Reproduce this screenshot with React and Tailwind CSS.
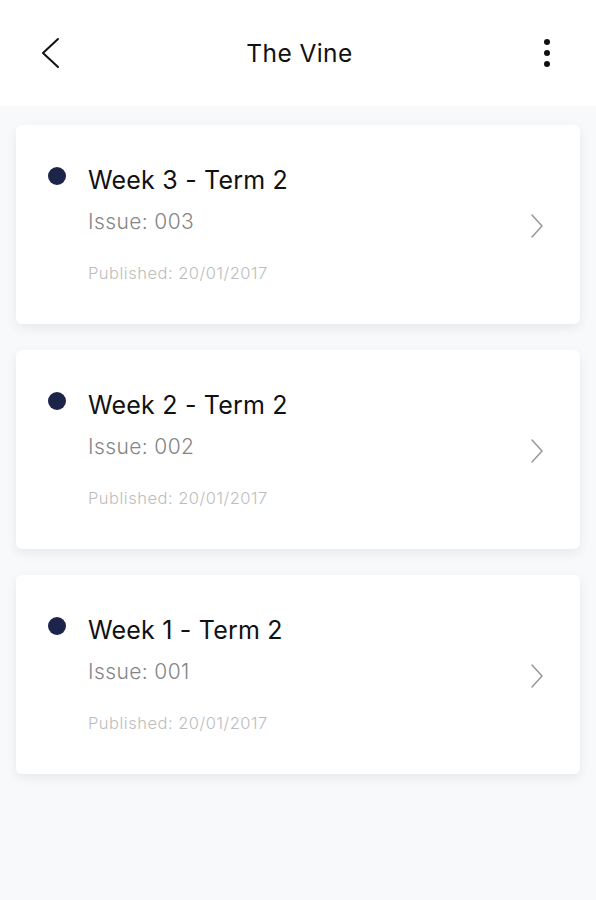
import React from "react";

const items = [
  { title: "Week 3 - Term 2", issue: "003" },
  { title: "Week 2 - Term 2", issue: "002" },
  { title: "Week 1 - Term 2", issue: "001" },
];

export default function App() {
  return (
    <div className="min-h-[900px] w-[596px] bg-[#f8f9fa]" style={{ fontFamily: "Inter, 'Noto Sans', sans-serif" }}>
      <header className="flex h-[106px] items-center justify-between bg-white pl-[40px] pr-[41px]">
        <svg width="20" height="32" viewBox="0 0 20 32" fill="none" stroke="#111" strokeWidth="2" strokeLinecap="round" strokeLinejoin="round">
          <path d="M18 2 L3 16 L18 30" />
        </svg>
        <h1 className="text-[24.5px] font-normal tracking-[0.4px] text-[#111]">The Vine</h1>
        <div className="flex w-[16px] flex-col items-center gap-[5.5px]">
          <span className="h-[5.5px] w-[5.5px] rounded-full bg-[#111]" />
          <span className="h-[5.5px] w-[5.5px] rounded-full bg-[#111]" />
          <span className="h-[5.5px] w-[5.5px] rounded-full bg-[#111]" />
        </div>
      </header>
      <main className="flex flex-col gap-[26px] px-[16px] pt-[19px]">
        {items.map((it) => (
          <div key={it.issue} className="flex h-[199px] items-start rounded-[6px] bg-white pl-[32px] pr-[36px] pt-[40px] shadow-[0_4px_12px_rgba(0,0,0,0.07)]">
            <span className="mt-[2px] h-[18px] w-[18px] shrink-0 rounded-full bg-[#1c2549]" />
            <div className="ml-[22px] flex flex-1 flex-col">
              <div className="text-[25px] leading-[30px] tracking-[0.2px] text-[#111]">{it.title}</div>
              <div className="mt-[15px] text-[21px] font-light leading-[24px] tracking-[0.4px] text-[#858585]">Issue: {it.issue}</div>
              <div className="mt-[29px] text-[16.5px] font-light leading-[20px] tracking-[0.5px] text-[#bdbdbd]">Published: 20/01/2017</div>
            </div>
            <svg className="mt-[48px]" width="14" height="26" viewBox="0 0 14 26" fill="none" stroke="#9a9a9a" strokeWidth="1.6" strokeLinecap="round" strokeLinejoin="round">
              <path d="M2 2 L12 13 L2 24" />
            </svg>
          </div>
        ))}
      </main>
    </div>
  );
}
